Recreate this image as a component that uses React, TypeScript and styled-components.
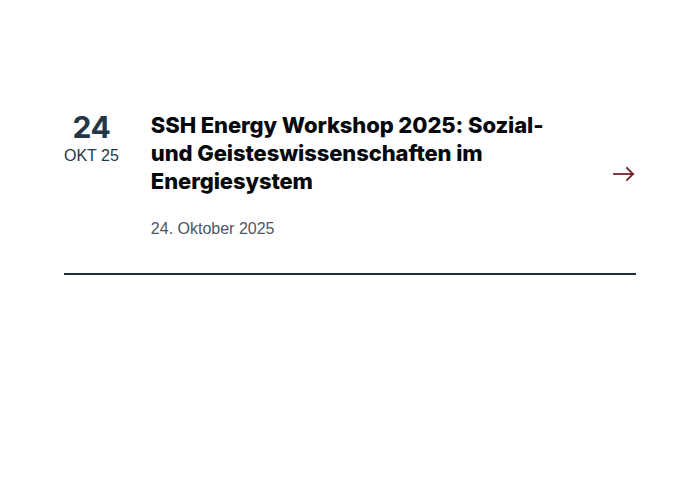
import styled, { createGlobalStyle } from 'styled-components';

const GlobalStyle = createGlobalStyle`
  html, body {
    margin: 0;
    padding: 0;
    background: #fff;
  }
`;

const Page = styled.div`
  padding: 111px 64px 0;
`;

const EventItem = styled.a`
  display: flex;
  align-items: flex-start;
  gap: 32px;
  padding-bottom: 34px;
  border-bottom: 2px solid #1e2d3b;
  text-decoration: none;
  color: inherit;
`;

const DateBox = styled.div`
  display: flex;
  flex-direction: column;
  align-items: center;
  font-family: 'Liberation Sans', Arial, sans-serif;
  color: #253746;
`;

const Day = styled.span`
  font-family: Inter, 'Liberation Sans', sans-serif;
  font-size: 30px;
  font-weight: 700;
  line-height: 32px;
  letter-spacing: -0.5px;
`;

const Month = styled.span`
  margin-top: 3px;
  font-size: 16px;
  line-height: 20px;
`;

const Body = styled.div`
  flex: 1;
  display: flex;
  flex-direction: column;
  gap: 24px;
`;

const Title = styled.h3`
  margin: 0;
  max-width: 410px;
  font-family: Inter, 'Liberation Sans', sans-serif;
  font-size: 22px;
  font-weight: 800;
  line-height: 28px;
  letter-spacing: -0.1px;
  color: #05080c;
`;

const When = styled.span`
  font-family: 'Liberation Sans', Arial, sans-serif;
  font-size: 16px;
  line-height: 20px;
  color: #4b5563;
`;

const Arrow = styled.span`
  display: flex;
  margin-top: 51px;
  color: #762329;
`;

export default function App() {
  return (
    <>
      <GlobalStyle />
      <Page>
        <EventItem href="#">
          <DateBox>
            <Day>24</Day>
            <Month>OKT 25</Month>
          </DateBox>
          <Body>
            <Title>SSH Energy Workshop 2025: Sozial- und Geisteswissenschaften im Energiesystem</Title>
            <When>24. Oktober 2025</When>
          </Body>
          <Arrow>
            <svg width="24" height="24" viewBox="0 0 24 24" fill="none" stroke="currentColor" strokeWidth="1.8" strokeLinecap="square">
              <path d="M2 12h19" />
              <path d="M15 6l6 6-6 6" />
            </svg>
          </Arrow>
        </EventItem>
      </Page>
    </>
  );
}
